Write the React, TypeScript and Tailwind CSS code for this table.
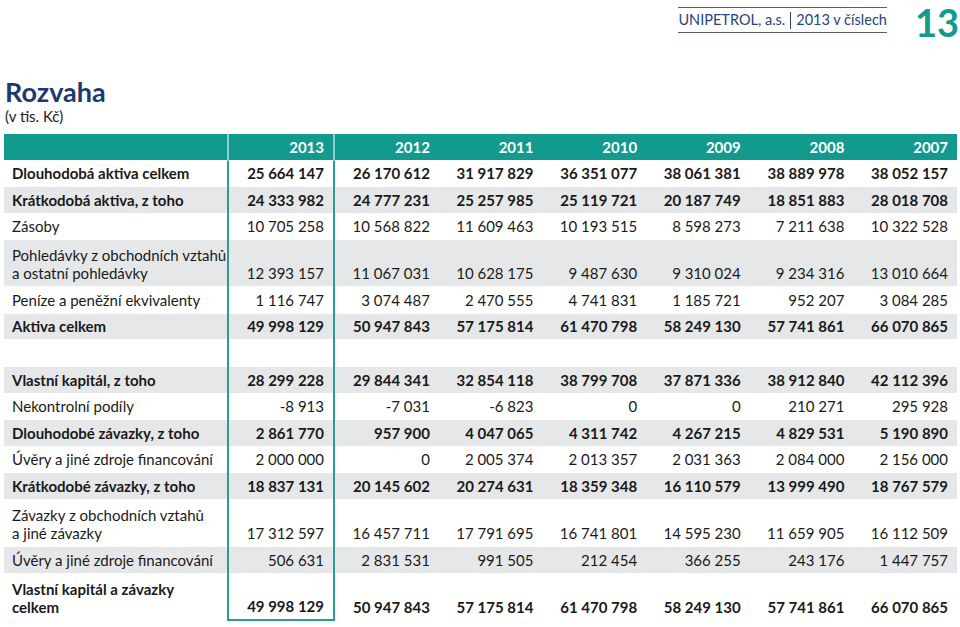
const years = ["2013", "2012", "2011", "2010", "2009", "2008", "2007"];

type Row = {
  label: string[];
  values: string[];
  bold?: boolean;
  grey?: boolean;
};

const rows: Row[] = [
  { label: ["Dlouhodobá aktiva celkem"], values: ["25 664 147", "26 170 612", "31 917 829", "36 351 077", "38 061 381", "38 889 978", "38 052 157"], bold: true },
  { label: ["Krátkodobá aktiva, z toho"], values: ["24 333 982", "24 777 231", "25 257 985", "25 119 721", "20 187 749", "18 851 883", "28 018 708"], bold: true, grey: true },
  { label: ["Zásoby"], values: ["10 705 258", "10 568 822", "11 609 463", "10 193 515", "8 598 273", "7 211 638", "10 322 528"] },
  { label: ["Pohledávky z obchodních vztahů", "a ostatní pohledávky"], values: ["12 393 157", "11 067 031", "10 628 175", "9 487 630", "9 310 024", "9 234 316", "13 010 664"], grey: true },
  { label: ["Peníze a peněžní ekvivalenty"], values: ["1 116 747", "3 074 487", "2 470 555", "4 741 831", "1 185 721", "952 207", "3 084 285"] },
  { label: ["Aktiva celkem"], values: ["49 998 129", "50 947 843", "57 175 814", "61 470 798", "58 249 130", "57 741 861", "66 070 865"], bold: true, grey: true },
  { label: [""], values: ["", "", "", "", "", "", ""] },
  { label: ["Vlastní kapitál, z toho"], values: ["28 299 228", "29 844 341", "32 854 118", "38 799 708", "37 871 336", "38 912 840", "42 112 396"], bold: true, grey: true },
  { label: ["Nekontrolní podíly"], values: ["-8 913", "-7 031", "-6 823", "0", "0", "210 271", "295 928"] },
  { label: ["Dlouhodobé závazky, z toho"], values: ["2 861 770", "957 900", "4 047 065", "4 311 742", "4 267 215", "4 829 531", "5 190 890"], bold: true, grey: true },
  { label: ["Úvěry a jiné zdroje financování"], values: ["2 000 000", "0", "2 005 374", "2 013 357", "2 031 363", "2 084 000", "2 156 000"] },
  { label: ["Krátkodobé závazky, z toho"], values: ["18 837 131", "20 145 602", "20 274 631", "18 359 348", "16 110 579", "13 999 490", "18 767 579"], bold: true, grey: true },
  { label: ["Závazky z obchodních vztahů", "a jiné závazky"], values: ["17 312 597", "16 457 711", "17 791 695", "16 741 801", "14 595 230", "11 659 905", "16 112 509"] },
  { label: ["Úvěry a jiné zdroje financování"], values: ["506 631", "2 831 531", "991 505", "212 454", "366 255", "243 176", "1 447 757"], grey: true },
  { label: ["Vlastní kapitál a závazky", "celkem"], values: ["49 998 129", "50 947 843", "57 175 814", "61 470 798", "58 249 130", "57 741 861", "66 070 865"], bold: true },
];

export default function App() {
  return (
    <div
      className="w-[960px] h-[627px] overflow-hidden bg-white text-[#1a1a1a]"
      style={{ fontFamily: "Lato, 'Open Sans', sans-serif" }}
    >
      {/* page header */}
      <div className="flex items-start justify-end pt-[7px] pr-[1px]">
        <div className="border-y border-[#55607a] h-[26px] flex items-center whitespace-nowrap text-[14.5px] text-[#26457a]">
          <span>UNIPETROL, a.s.</span>
          <span className="mx-[5px] h-[17px] border-l border-[#26457a]" />
          <span>2013 v číslech</span>
        </div>
        <div className="ml-[28px] -mt-[5px] text-[38px] leading-[40px] font-bold text-[#119a8d]">13</div>
      </div>

      {/* title */}
      <div className="pl-[5px] mt-[36px]">
        <div className="text-[27px] leading-[28px] font-bold text-[#1c3a6e]">Rozvaha</div>
        <div className="text-[15px] leading-[18px] mt-[1px]">(v tis. Kč)</div>
      </div>

      {/* table */}
      <table className="ml-[4px] mt-[9px] w-[953px] border-collapse text-[15px] leading-[18px]">
        <colgroup>
          <col className="w-[224px]" />
          {years.map((y) => (
            <col key={y} />
          ))}
        </colgroup>
        <thead>
          <tr className="bg-[#119a8d] text-white h-[26px]">
            <th />
            {years.map((y, i) => (
              <th
                key={y}
                className={
                  "text-right pr-[9px] font-bold " +
                  (i === 0 ? "border-x-2 border-[#8fd0c9]" : "")
                }
              >
                {y}
              </th>
            ))}
          </tr>
        </thead>
        <tbody>
          {rows.map((r, ri) => {
            const last = ri === rows.length - 1;
            const tall = r.label.length > 1;
            return (
              <tr
                key={ri}
                className={
                  (r.grey ? "bg-[#e6e7e8] " : "bg-white ") +
                  (r.bold ? "font-bold " : "") +
                  (tall ? "h-[47px]" : "h-[26.6px]")
                }
              >
                <td className="pl-[8px] align-bottom pb-[4px] border-t border-white whitespace-nowrap">
                  {r.label.map((l, li) => (
                    <div key={li}>{l}</div>
                  ))}
                </td>
                {r.values.map((v, vi) => (
                  <td
                    key={vi}
                    className={
                      "text-right pr-[9px] align-bottom pb-[4px] border-t border-white whitespace-nowrap " +
                      (vi === 0
                        ? "border-x-2 border-x-[#2a9d92] " + (last ? "border-b-2 border-b-[#2a9d92]" : "")
                        : "")
                    }
                  >
                    {v}
                  </td>
                ))}
              </tr>
            );
          })}
        </tbody>
      </table>
    </div>
  );
}
